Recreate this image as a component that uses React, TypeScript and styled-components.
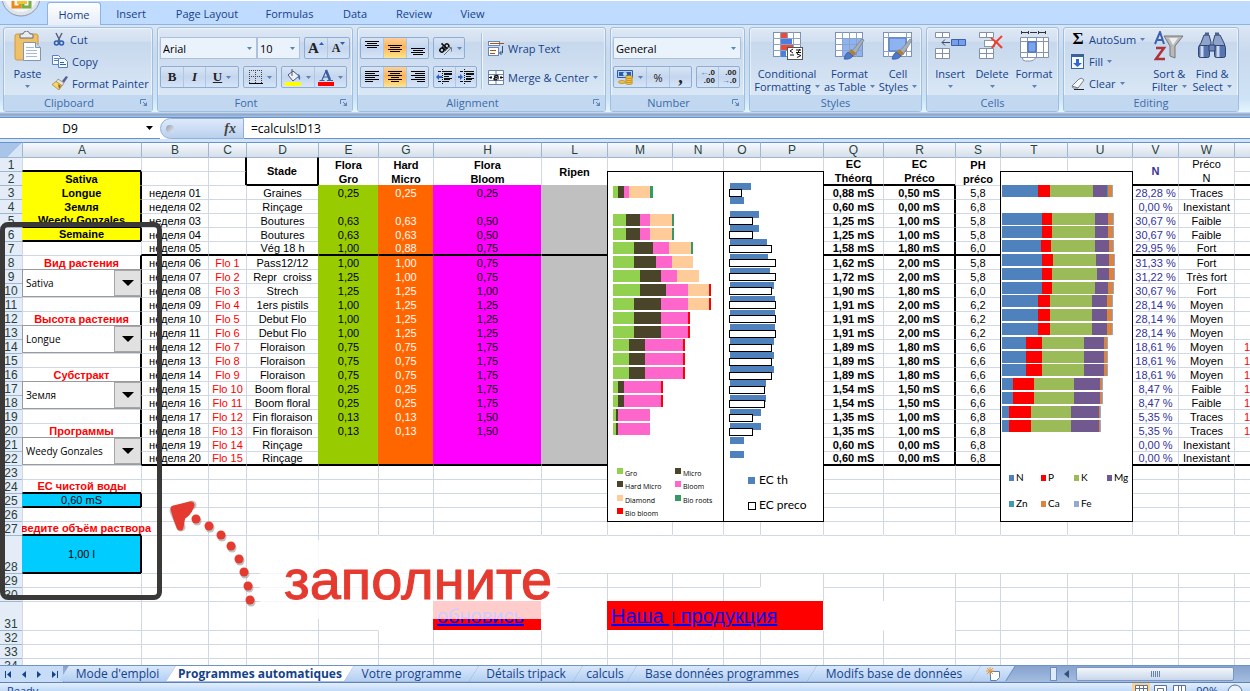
import React from 'react';
import styled, { createGlobalStyle, css } from 'styled-components';

const ui = '"Open Sans", "Noto Sans", sans-serif';
const sheetFont = '"Liberation Sans", Arial, sans-serif';

const Global = createGlobalStyle`
  *, *::before, *::after { box-sizing: border-box; }
  body { margin: 0; background: #fff; overflow: hidden; font-family: ${ui}; }
  button, select, input { font: inherit; color: inherit; margin: 0; padding: 0; border: 0; background: none; }
  button { cursor: pointer; }
  svg { display: block; flex: none; }
`;

const Page = styled.div`
  height: 100vh;
  display: flex;
  flex-direction: column;
  overflow: hidden;
  font-size: 11px;
  color: #15428b;
`;

/* ---------- ribbon ---------- */

const TabStrip = styled.nav`
  position: relative;
  flex: none;
  height: 25px;
  border-top: 1px solid #fff;
  border-bottom: 1px solid #8db2e3;
  background: #bfdbff;
  display: flex;
  align-items: flex-end;
  padding-left: 47px;
`;

const OfficeButton = styled.button`
  position: absolute;
  left: 0;
  top: 0;
  z-index: 2;
`;

const RibbonTab = styled.button<{ $w: number; $active?: boolean }>`
  width: ${p => p.$w}px;
  height: 23px;
  margin-bottom: -1px;
  color: #15428b;
  ${p => p.$active && css`
    background: linear-gradient(#fdfeff, #e6eef9);
    border: 1px solid #8db2e3;
    border-bottom: 0;
    border-radius: 3px 3px 0 0;
  `}
`;

const Ribbon = styled.div`
  flex: none;
  height: 92px;
  display: flex;
  gap: 4px;
  padding: 2px 3px 5px;
  background: linear-gradient(#dbe6f4, #c9d9ee 30%, #cfe3f6 80%, #e3f5fd 94%, #8ba5cc 97%, #a9bfdf);
`;

const GroupBox = styled.section<{ $w: number }>`
  width: ${p => p.$w}px;
  flex: none;
  display: flex;
  flex-direction: column;
  border: 1px solid #9fbfdf;
  border-radius: 3px;
  overflow: hidden;
  box-shadow: inset 0 0 0 1px rgba(255, 255, 255, 0.5);
  background: linear-gradient(#dee8f5, #d3e0f1 16%, #c7d8ed 17%, #d9e7f5 80%);
`;

const GroupBody = styled.div`
  flex: 1;
  display: flex;
  padding: 0 3px 0 2px;
`;

const GroupLabel = styled.div<{ $launcher?: boolean }>`
  position: relative;
  height: 16px;
  line-height: 16px;
  text-align: center;
  color: #3e6aaa;
  background: #c1d8f0;
  padding-right: ${p => (p.$launcher ? 18 : 0)}px;
  svg { position: absolute; right: 4px; top: 4px; }
`;

const Rows = styled.div`
  display: flex;
  flex-direction: column;
  gap: 7px;
  padding-top: 9px;
`;

const Row = styled.div<{ $gap?: number }>`
  display: flex;
  gap: ${p => p.$gap ?? 4}px;
`;

const Cluster = styled.div`
  display: flex;
  height: 22px;
  border: 1px solid #8eadd5;
  border-radius: 2px;
  background: linear-gradient(#d8e4f4, #c4d6ee 50%, #d6e4f6);
`;

const Tool = styled.button<{ $w?: number; $on?: boolean; $high?: boolean }>`
  width: ${p => p.$w ?? 22}px;
  display: flex;
  align-items: center;
  justify-content: center;
  gap: ${p => (p.$high ? 0 : 4)}px;
  color: #222;
  & + & { border-left: 1px solid #afc7e5; }
  ${p => p.$on && css`background: linear-gradient(#fbd09a, #fdb457 45%, #ffe58a);`}
  ${p => p.$high && css`svg { align-self: flex-start; margin-top: 4px; }`}
`;

const Glyph = styled.span<{ $size?: number; $italic?: boolean; $line?: boolean }>`
  font: bold ${p => p.$size ?? 13}px "Liberation Serif", serif;
  font-style: ${p => (p.$italic ? 'italic' : 'normal')};
  text-decoration: ${p => (p.$line ? 'underline' : 'none')};
`;

const Combo = styled.label<{ $w: number }>`
  position: relative;
  width: ${p => p.$w}px;
  height: 22px;
  display: flex;
  align-items: center;
  color: #000;
  background: #eaf2fb;
  border: 1px solid #abc1de;
  select { appearance: none; width: 100%; height: 20px; padding-left: 2px; outline: 0; }
  svg { position: absolute; right: 4px; }
`;

const Commands = styled.div<{ $pad?: number }>`
  display: flex;
  flex-direction: column;
  padding-left: ${p => p.$pad ?? 3}px;
`;

const Command = styled.button`
  height: 22px;
  display: flex;
  align-items: center;
  gap: 4px;
  text-align: left;
  white-space: nowrap;
`;

const IconSlot = styled.span`
  width: 14px;
  display: flex;
  justify-content: center;
  color: #000;
`;

const BigCommand = styled.button<{ $w: number }>`
  width: ${p => p.$w}px;
  flex: none;
  display: flex;
  flex-direction: column;
  align-items: center;
  padding-top: 3px;
  line-height: 13px;
  white-space: nowrap;
`;

const BigLine = styled.span`
  display: flex;
  align-items: center;
  justify-content: center;
  gap: 4px;
  min-height: 13px;
`;

const BigIcon = styled.span`
  height: 36px;
`;

const Divider = styled.span`
  width: 2px;
  height: 56px;
  margin: 5px 5px 0 4px;
  background: #a9c1de;
  border-right: 1px solid #f0f6fc;
`;

const Caret = ({ fill = '#5b83b5', up }: { fill?: string; up?: boolean }) => (
  <svg width="5" height="3" viewBox="0 0 5 3"><path d={up ? 'M0 3h5L2.500 0z' : 'M0 0h5L2.500 3z'} fill={fill} /></svg>
);

const Launcher = () => (
  <svg width="8" height="8" viewBox="0 0 8 8" fill="none" stroke="#5e86b8">
    <path d="M.5 5V.5H6" /><path d="M3 3l2 2" /><path d="M7 3v4H3z" fill="#5e86b8" stroke="none" />
  </svg>
);

const Group = ({ label, w, launcher, children }: { label: string; w: number; launcher?: boolean; children: React.ReactNode }) => (
  <GroupBox $w={w}>
    <GroupBody>{children}</GroupBody>
    <GroupLabel $launcher={launcher}>{label}{launcher && <Launcher />}</GroupLabel>
  </GroupBox>
);

const Lines = ({ y, ends }: { y: number; ends: [number, number][] }) => (
  <svg width="16" height="16" viewBox="0 0 16 16" stroke="#000" strokeWidth="1">
    {ends.map(([a, b], i) => <path key={i} d={`M${a} ${y + i * 2 + 0.5}H${b}`} />)}
  </svg>
);

const full: [number, number][] = [[1, 15], [3, 13], [1, 15], [3, 13]];
const leftLines: [number, number][] = [[1, 15], [1, 11], [1, 15], [1, 11], [1, 15], [1, 9]];
const midLines: [number, number][] = [[1, 15], [3, 13], [1, 15], [4, 12], [1, 15], [4, 12]];
const rightLines: [number, number][] = [[1, 15], [5, 15], [1, 15], [5, 15], [1, 15], [7, 15]];

const Indent = ({ flip }: { flip?: boolean }) => (
  <svg width="17" height="16" viewBox="0 0 17 16" stroke="#111">
    <path d="M2 2.500h3M7 2.500h9M8 5.500h8M8 7.500h5M8 9.500h8M2 12.500h3M7 12.500h6" />
    <path d="M8 5h8M8 10h6" strokeWidth="2" />
    <path d="M6.500 0v16" strokeDasharray="1 1" />
    <path d={flip ? 'M5 8L2 5v2H0v2h2v2z' : 'M0 8l3-3v2h3v2H3v2z'} fill="#2f63c4" stroke="none" />
  </svg>
);

const PasteIcon = () => (
  <svg width="28" height="31" viewBox="0 0 28 31">
    <rect x="1" y="3" width="23" height="26" rx="2" fill="#eec067" stroke="#c99a45" />
    <path d="M6 7V4q0-1 1-1h2q1-3 3.500-3T16 3h2q1 0 1 1v3z" fill="#e9edf2" stroke="#666d78" />
    <path d="M9.500 11.500h12l5 5v13h-17z" fill="#fbfdff" stroke="#8294b1" />
    <path d="M21.500 11.500v5h5" fill="#cbd8ea" stroke="#8294b1" />
    <path d="M12 16.500h8M12 19.500h11M12 22.500h11M12 25.500h11" stroke="#a9b9d2" />
  </svg>
);

const CutIcon = () => (
  <svg width="14" height="15" viewBox="0 0 14 15" fill="none">
    <path d="M4 1l4 8M10 1L6 9" stroke="#59647a" strokeWidth="1.500" />
    <circle cx="4.500" cy="11" r="2" stroke="#2f5fb5" strokeWidth="1.600" />
    <circle cx="9.500" cy="11" r="2" stroke="#2f5fb5" strokeWidth="1.600" />
  </svg>
);

const CopyIcon = () => (
  <svg width="16" height="14" viewBox="0 0 16 14" fill="#f4f9ff" stroke="#5a80bb">
    <path d="M.5 1.500h6l2 2v7h-8z" /><path d="M2 4.500h4M2 6.500h4" />
    <path d="M6.500 4.500h6l3 3v6h-9z" /><path d="M8 8.500h4M8 10.500h6" stroke="#2f62ae" />
  </svg>
);

const BrushIcon = () => (
  <svg width="16" height="14" viewBox="0 0 16 14">
    <path d="M10 5l4-5 2 1-4 6z" fill="#59618f" />
    <path d="M6 3l6 4-2 3-6-4z" fill="#e9e3dc" stroke="#8b7a6a" strokeWidth=".7" />
    <path d="M4 5.500l6 4L7 14 0 8.500z" fill="#f3d66d" stroke="#a57e25" strokeWidth=".7" />
    <path d="M6 8l3 2-2 3z" fill="#8e6428" />
  </svg>
);

const BorderIcon = () => (
  <svg width="14" height="14" viewBox="0 0 14 14" fill="none" stroke="#444">
    <path d="M.5 0v13M6.500 0v13M12.500 0v13M0 .5h13M0 6.500h13" strokeDasharray="1 1" /><path d="M0 13.500h14" stroke="#000" />
  </svg>
);

const FillIcon = () => (
  <svg width="17" height="17" viewBox="0 0 17 17">
    <path d="M3 6l5-4 6 5-6 5z" fill="#eef2f8" stroke="#4a5670" /><path d="M7 0v7" stroke="#4a5670" />
    <path d="M13 5q3 1 2 6-2-1-2-4z" fill="#3d6fb8" /><rect y="13" width="16" height="4" fill="#ff0" />
  </svg>
);

const FontColorIcon = () => (
  <svg width="16" height="17" viewBox="0 0 16 17">
    <path d="M4 11L8 2M7.500 1.500l4 9.500" fill="none" stroke="#3a5f9e" strokeWidth="1.200" /><path d="M8 1l4 10" stroke="#3a5f9e" strokeWidth="2.400" />
    <path d="M5 8h5M1.500 11.500h5M9 11.500h6" stroke="#3a5f9e" /><rect y="13" width="16" height="4" fill="#f00" />
  </svg>
);

const Orient = () => (
  <svg width="16" height="15" viewBox="0 0 16 15" fill="none" stroke="#111">
    <g transform="rotate(-45 7 7)" strokeWidth="1.600"><circle cx="4" cy="7" r="2" /><path d="M6.500 4.500V10M8.500 2v8" /><circle cx="10.500" cy="7.500" r="2" /></g>
    <path d="M7 14l7-7M10.500 6.500h4v4" stroke="#777" />
  </svg>
);

const WrapIcon = () => (
  <svg width="16" height="15" viewBox="0 0 16 15" fill="none">
    <rect x=".5" y=".5" width="11" height="4" fill="#fff" stroke="#6c87af" /><path d="M2 2.500h14" stroke="#a55318" />
    <rect x=".5" y="6.500" width="10" height="8" fill="#fff" stroke="#6c87af" /><path d="M2 9.500h6M2 12.500h5" stroke="#a55318" />
    <path d="M14.500 5v7H12M13.500 10l-2 2 2 2" stroke="#35507d" />
  </svg>
);

const MergeIcon = () => (
  <svg width="16" height="15" viewBox="0 0 16 15" fill="#fff" stroke="#6c87af">
    <path d="M.5.5h15v14H.5zM8 .5V4M8 11v3.500M.5 4.500h15M.5 10.500h15" />
    <path d="M1 7.500h3M12 7.500h3M3 6v3M13 6v3" stroke="#111" /><path d="M6 6.500q4-2 4 0v3M9 7.500q-3 0-3 1.500t3 .500" fill="none" stroke="#111" strokeWidth="1.400" />
  </svg>
);

const MoneyIcon = () => (
  <svg width="17" height="16" viewBox="0 0 17 16">
    <rect width="16" height="8" y="1" rx="1" fill="#2d5ca8" /><rect x="1.500" y="2.500" width="13" height="5" fill="none" stroke="#b9d1f1" /><circle cx="8" cy="5" r="2" fill="#c8dcf6" />
    <g fill="#f3c440" stroke="#a5781b" strokeWidth=".6"><ellipse cx="12" cy="14" rx="3.500" ry="1.500" /><ellipse cx="12" cy="12" rx="3.500" ry="1.500" /><ellipse cx="12" cy="10" rx="3.500" ry="1.500" /><ellipse cx="12" cy="8" rx="3.500" ry="1.500" /><ellipse cx="5" cy="13" rx="3.500" ry="1.500" /></g>
  </svg>
);

const DecimalBox = styled.span`
  font: bold 8px/8px ${sheetFont};
  display: flex;
  flex-direction: column;
  align-items: flex-end;
  i { font-style: normal; color: #2f63c4; }
`;

const Paintbrush = () => (
  <g>
    <path d="M28 8l2 1-9 15-4-3z" fill="#a8afb8" stroke="#747c87" strokeWidth=".7" />
    <path d="M17 18l5 4-3 4-5-4z" fill="#a98042" />
    <path d="M14 21l5 4q-3 4-9 3 1-5 4-7z" fill="#4b79ce" stroke="#3059a3" strokeWidth=".7" />
  </g>
);

const CondIcon = () => (
  <svg width="32" height="30" viewBox="0 0 32 30">
    <rect x="2.500" y="1.500" width="27" height="24" fill="#fff" stroke="#7b91b5" />
    <path d="M9.500 1v25M16.500 1v25M22.500 1v25M2 7.500h28M2 13.500h28M2 19.500h28" stroke="#8da3c6" />
    <path d="M10 2h6v5h-6zM10 14h12v5H10z" fill="#ee4a35" /><path d="M10 8h11v5H10zM10 20h5v6h-5z" fill="#4b7fe0" />
    <rect x="16.500" y="16.500" width="15" height="12" fill="#fff" stroke="#555" /><path d="M22 18l-3 2 3 2M19 24h4M25 19h5M25 21.500h5M29 18l-3 5M26 23l4 1.500-4 2" fill="none" stroke="#111" />
  </svg>
);

const TableIcon = () => (
  <svg width="32" height="30" viewBox="0 0 32 30">
    <rect x="1.500" y="1.500" width="27" height="24" fill="#fff" stroke="#7b91b5" /><path d="M8 8h20v17H8z" fill="#8db3f0" />
    <path d="M8.500 1v25M15.500 1v25M22.500 1v25M1 7.500h28M1 13.500h28M1 19.500h28" stroke="#8da3c6" /><Paintbrush />
  </svg>
);

const StylesIcon = () => (
  <svg width="32" height="30" viewBox="0 0 32 30">
    <rect x="1.500" y="1.500" width="28" height="24" fill="#fff" stroke="#7b91b5" /><path d="M6.500 1v25M24.500 1v25M1 6.500h28M1 20.500h28" stroke="#8da3c6" />
    <path d="M7 7h17v13H7z" fill="#8db3f0" stroke="#4874bd" /><Paintbrush />
  </svg>
);

const InsertIcon = () => (
  <svg width="32" height="30" viewBox="0 0 32 30" fill="#fff" stroke="#8290a8">
    <path d="M1.500 1.500h14v5h-14zM8.500 1.500v5M1.500 17.500h14v10h-14zM8.500 17.500v10M1.500 22.500h14" />
    <path d="M17.500 8.500h14v6h-14zM24.500 8.500v6" fill="#77a0ea" stroke="#3a62ad" /><path d="M8 11.500h8M11 8.500l-3 3 3 3" fill="none" stroke="#3d4a63" />
  </svg>
);

const DeleteIcon = () => (
  <svg width="28" height="30" viewBox="0 0 28 30" fill="#fff" stroke="#8290a8">
    <path d="M1.500 1.500h14v5h-14zM8.500 1.500v5M1.500 17.500h14v10h-14zM8.500 17.500v10M1.500 22.500h14" />
    <path d="M6.500 9.500h10v6h-10z" strokeDasharray="1 1" stroke="#344" /><path d="M13 7q6 4 11 10M24 5q-6 5-10 12" fill="none" stroke="#ee3f2c" strokeWidth="2" />
  </svg>
);

const FormatIcon = () => (
  <svg width="32" height="31" viewBox="0 0 32 31" fill="#fff" stroke="#8494ae">
    <path d="M2.500 6.500h28v20h-28z" /><path d="M9.500 6v21M18.500 6v21M25.500 6v21M2 10.500h29M2 21.500h29" />
    <path d="M10 11h8v10h-8z" fill="#7ba4ec" stroke="#3e68b5" /><path d="M4.500 27q0 3 3 3h5q3 0 5-3" />
    <path d="M4 1.500h6M12 1.500h7M21 1.500h6M3.500 0v3M10.500 0v3M20.500 0v3M27.500 0v3" stroke="#333" />
  </svg>
);

const SortIcon = () => (
  <svg width="30" height="30" viewBox="0 0 30 30" fill="none">
    <path d="M1 13l5-12 4 12M3 9h6" stroke="#3a62ad" strokeWidth="2" /><path d="M2 17h8L2 28h9" stroke="#ad3339" strokeWidth="2.500" />
    <path d="M10 5h19l-8 10v12l-5-2V15z" fill="#b9b9b9" stroke="#777" /><path d="M15 7h9l-5 7z" fill="#ededed" />
  </svg>
);

const FindIcon = () => (
  <svg width="30" height="30" viewBox="0 0 30 30" stroke="#31456f">
    <path d="M4 12l3-8h5l2 7v4H2zM16 11l2-7h5l4 8 1 3H16z" fill="#8ea4cc" /><path d="M8 3h4M18 3h4" stroke="#4b628f" strokeWidth="3" />
    <rect x="1.500" y="14.500" width="11" height="12" rx="2" fill="#5674ae" /><rect x="17.500" y="14.500" width="11" height="12" rx="2" fill="#5674ae" />
    <path d="M12 14h6v6h-6z" fill="#6f88ba" /><path d="M5 15v11M21 15v11" stroke="#cbd8f0" strokeWidth="3" />
  </svg>
);

const FillDown = () => (
  <svg width="14" height="15" viewBox="0 0 14 15"><rect x=".5" y=".5" width="12" height="14" fill="#f3f8ff" stroke="#3d6098" /><path d="M1 2h11" stroke="#3d6098" strokeWidth="2" /><path d="M5 5h3v4h3l-4.500 4L2 9h3z" fill="#2e68d2" /></svg>
);

const Eraser = () => (
  <svg width="14" height="13" viewBox="0 0 14 13"><path d="M1 9l7-7q3-2 5 1L7 11H2z" fill="#f8f9fb" stroke="#767f90" /><path d="M1 9l6 2" stroke="#767f90" /><path d="M3 12.500h10" stroke="#222" /></svg>
);

/* ---------- formula bar ---------- */

const FormulaBar = styled.div`
  flex: none;
  height: 25px;
  display: flex;
  font-size: 12px;
  color: #000;
  border-top: 1px solid #6593cf;
  border-bottom: 3px solid #d5e4f5;
`;

const NameBox = styled.label`
  width: 160px;
  display: flex;
  align-items: center;
  border-bottom: 1px solid #6593cf;
  input { width: 140px; text-align: center; outline: 0; }
  svg { margin-left: 6px; }
`;

const FxArea = styled.div`
  width: 84px;
  height: 21px;
  display: flex;
  align-items: center;
  justify-content: space-between;
  padding: 0 7px 0 5px;
  border: 1px solid #8fb0da;
  border-radius: 11px 0 0 11px;
  background: linear-gradient(#dfeafa, #b9d0ee);
  font: italic bold 14px "Liberation Serif", serif;
  color: #444;
`;

const Knob = styled.span`
  width: 8px;
  height: 8px;
  border-radius: 50%;
  background: linear-gradient(135deg, #8f9db3, #e9edf3);
`;

const FormulaInput = styled.input`
  flex: 1;
  padding-left: 7px !important;
  border-bottom: 1px solid #6593cf !important;
  outline: 0;
`;

/* ---------- sheet ---------- */

const Sheet = styled.main`
  position: relative;
  flex: 1;
  min-height: 0;
  overflow: hidden;
  font-family: ${sheetFont};
  color: #000;
`;

const Table = styled.table`
  table-layout: fixed;
  width: 100%;
  border-spacing: 0;
  font-size: 11px;
  line-height: 12px;
`;

const ColHead = styled.th`
  height: 15px;
  padding: 0;
  font-weight: normal;
  font-size: 12px;
  color: #27413e;
  border-left: 1px solid #9eb6ce;
  border-top: 1px solid #6593cf;
  background: linear-gradient(#f7fafd, #d5deea);
`;

const Corner = styled(ColHead)`
  border-left: 0;
  background: linear-gradient(135deg, #a9c4e9 60%, #d7e5f7 60%);
`;

const RowHead = styled.th<{ $h: number }>`
  position: relative;
  z-index: 1;
  height: ${p => p.$h}px;
  padding: 0;
  vertical-align: bottom;
  font-weight: normal;
  font-size: 12px;
  color: #27413e;
  background: #e4ecf7;
  border-top: 1px solid #9eb6ce;
`;

interface CellProps {
  $fill?: string; $color?: string; $bold?: boolean; $t?: boolean; $r?: boolean; $b?: boolean; $l?: boolean;
  $noTop?: boolean; $noLeft?: boolean; $mid?: boolean; $end?: boolean; $head?: boolean;
}

const Cell = styled.td<CellProps>`
  padding: 0;
  text-align: ${p => (p.$end ? 'right' : 'center')};
  vertical-align: ${p => (p.$mid ? 'middle' : 'bottom')};
  white-space: nowrap;
  color: ${p => p.$color ?? '#000'};
  font-weight: ${p => (p.$bold ? 'bold' : 'normal')};
  background: ${p => p.$fill ?? 'transparent'};
  border-style: solid;
  border-color: ${p => (p.$head ? '#9eb6ce' : p.$t ? '#000' : p.$noTop ? 'transparent' : p.$fill ?? '#d0d7e5')} #000 #000
    ${p => (p.$l ? '#000' : p.$noLeft ? 'transparent' : p.$fill ?? '#d0d7e5')};
  border-width: 1px ${p => (p.$r ? 1 : 0)}px ${p => (p.$b ? 1 : 0)}px 1px;
`;

const TwoLine = styled.div`
  line-height: 14px;
  margin: -1px 0;
`;

const Spill = styled.div`
  display: flex;
  justify-content: center;
`;

const PickerCell = styled(Cell)`
  position: relative;
  border: 0;
`;

const Picker = styled.label`
  display: flex;
  height: 28px;
  border: 1px solid #9a9a9a;
  border-width: 1px 0 1px 1px;
  background: #fff;
  font: 10px ${ui};
  select { flex: 1; min-width: 0; appearance: none; padding-left: 3px; outline: 0; }
`;

const PickerArrow = styled.span`
  width: 27px;
  display: flex;
  align-items: center;
  justify-content: center;
  background: #e1e1e1;
  border: 1px solid #a6a6a6;
`;

const ChartCell = styled.td`
  position: relative;
  padding: 0;
  svg { position: absolute; left: 0; top: 0; z-index: 1; }
`;

const LinkCell = styled(Cell)`
  font-size: 20px;
  line-height: 26px;
  text-align: left;
  vertical-align: middle;
  overflow: hidden;
  a { color: #00f; padding-left: 3px; }
`;

const ClippedLink = styled.div`
  overflow: hidden;
  text-indent: -12px;
`;

const cols: [string, number][] = [
  ['A', 119], ['B', 67], ['C', 38], ['D', 72], ['E', 60], ['G', 55], ['H', 108], ['L', 66], ['M', 65], ['N', 51],
  ['O', 37], ['P', 63], ['Q', 60], ['R', 72], ['S', 45], ['T', 67], ['U', 65], ['V', 46], ['W', 56],
];
const letters = 'ABCDEGHLMNOPQRSTUVWX';

const data = [
  ['01', 'Graines', '0,25', '0,25', '0,25', '0,88', '0,50', '5,8', '28,28', 'Traces'],
  ['02', 'Rinçage', '', '', '', '0,60', '0,00', '6,8', '0,00', 'Inexistant'],
  ['03', 'Boutures', '0,63', '0,63', '0,50', '1,25', '1,00', '5,8', '30,67', 'Faible'],
  ['04', 'Boutures', '0,63', '0,63', '0,50', '1,25', '1,00', '5,8', '30,67', 'Faible'],
  ['05', 'Vég 18 h', '1,00', '0,88', '0,75', '1,58', '1,80', '6,0', '29,95', 'Fort'],
  ['06', 'Pass12/12', '1,00', '1,00', '0,75', '1,62', '2,00', '5,8', '31,33', 'Fort'],
  ['07', 'Repr\u00a0 croiss', '1,25', '1,00', '0,75', '1,72', '2,00', '5,8', '31,22', 'Très fort'],
  ['08', 'Strech', '1,25', '1,25', '1,00', '1,90', '1,80', '6,0', '30,67', 'Fort'],
  ['09', '1ers pistils', '1,00', '1,25', '1,25', '1,91', '2,00', '6,2', '28,14', 'Moyen'],
  ['10', 'Debut Flo', '1,00', '1,25', '1,25', '1,91', '2,00', '6,2', '28,14', 'Moyen'],
  ['11', 'Debut Flo', '1,00', '1,25', '1,25', '1,91', '2,00', '6,2', '28,14', 'Moyen'],
  ['12', 'Floraison', '0,75', '0,75', '1,75', '1,89', '1,80', '6,6', '18,61', 'Moyen'],
  ['13', 'Floraison', '0,75', '0,75', '1,75', '1,89', '1,80', '6,6', '18,61', 'Moyen'],
  ['14', 'Floraison', '0,75', '0,75', '1,75', '1,89', '1,80', '6,6', '18,61', 'Moyen'],
  ['15', 'Boom floral', '0,25', '0,25', '1,75', '1,54', '1,50', '6,6', '8,47', 'Faible'],
  ['16', 'Boom floral', '0,25', '0,25', '1,75', '1,54', '1,50', '6,6', '8,47', 'Faible'],
  ['17', 'Fin floraison', '0,13', '0,13', '1,50', '1,35', '1,00', '6,8', '5,35', 'Traces'],
  ['18', 'Fin floraison', '0,13', '0,13', '1,50', '1,35', '1,00', '6,8', '5,35', 'Traces'],
  ['19', 'Rinçage', '', '', '', '0,60', '0,00', '6,8', '0,00', 'Inexistant'],
  ['20', 'Rinçage', '', '', '', '0,60', '0,00', '6,8', '0,00', 'Inexistant'],
];

const labels: Record<number, string> = {
  2: 'Sativa', 3: 'Longue', 4: 'Земля', 5: 'Weedy Gonzales', 6: 'Semaine', 8: 'Вид растения', 12: 'Высота растения',
  16: 'Субстракт', 20: 'Программы', 24: 'ЕС чистой воды', 25: '0,60 mS', 27: 'Введите объём раствора', 28: '1,00 l',
};
const pickers: Record<number, string> = { 9: 'Sativa', 13: 'Longue', 17: 'Земля', 21: 'Weedy Gonzales' };
const heads: Record<string, string[]> = {
  D: ['Stade'], E: ['Flora', 'Gro'], G: ['Hard', 'Micro'], H: ['Flora', 'Bloom'], L: ['Ripen'],
  Q: ['EC', 'Théorq'], R: ['EC', 'Préco'], S: ['PH', 'préco'], V: ['N'], W: ['Préco', 'N'],
};

/* heavy rules: the row (or column) whose leading edge carries the line */
const hRules: [number, string][] = [
  [2, 'A'], [6, 'A'], [7, 'A'], [25, 'A'], [26, 'A'], [28, 'A'], [29, 'A'],
  [3, 'DQRVWX'], [8, 'BCDEGHLQRSVWX'], [23, 'BCDEGHLQRSVWX'],
];
const vRules: [string, number, number][] = [
  ['B', 2, 6], ['B', 8, 22], ['B', 25, 25], ['B', 28, 28], ['D', 1, 2], ['E', 1, 2], ['S', 3, 22],
];
const ruleAbove = (row: number, c: string) => hRules.some(([r, s]) => r === row && s.includes(c));
const ruleBefore = (row: number, c: string) => !!c && vRules.some(([v, a, b]) => v === c && row >= a && row <= b);
const edges = (row: number, c: string, span = 1) => {
  const next = letters[letters.indexOf(c) + 1] ?? '';
  return { $t: ruleAbove(row, c), $b: ruleAbove(row + span, c), $l: ruleBefore(row, c), $r: ruleBefore(row, next) };
};

const fills: Record<string, string> = { E: '#99cc00', G: '#ff6600', H: '#ff00ff', L: '#c0c0c0' };

const content = (row: number, c: string): { text: string; props?: CellProps } => {
  if (c === 'A') {
    const text = labels[row] ?? '';
    if (row >= 2 && row <= 6) return { text, props: { $fill: '#ffff00', $bold: true } };
    if (row === 25 || row === 28) return { text, props: { $fill: '#00ccff', $mid: true } };
    return { text, props: { $color: '#ff0000', $bold: true } };
  }
  const d = row >= 3 && row <= 22 ? data[row - 3] : null;
  if (!d) return { text: '' };
  switch (c) {
    case 'B': return { text: `неделя ${d[0]}` };
    case 'C': return { text: row >= 8 ? `Flo ${row - 7}` : '', props: { $color: '#ff0000' } };
    case 'D': return { text: d[1] };
    case 'E': return { text: d[2], props: { $fill: fills.E } };
    case 'G': return { text: d[3], props: { $fill: fills.G, $color: '#fff' } };
    case 'H': return { text: d[4], props: { $fill: fills.H } };
    case 'L': return { text: '', props: { $fill: fills.L } };
    case 'Q': return { text: `${d[5]} mS`, props: { $bold: true } };
    case 'R': return { text: `${d[6]} mS`, props: { $bold: true } };
    case 'S': return { text: d[7] };
    case 'V': return { text: `${d[8]} %`, props: { $color: '#333399' } };
    case 'W': return { text: d[9] };
    case 'X': return { text: row >= 14 && row <= 20 ? '1' : '', props: { $color: '#ff0000', $end: true } };
    default: return { text: '' };
  }
};

/* ---------- charts ---------- */

const Chart = styled.svg`
  font-family: Lato, ${ui};
`;

const mixColors = ['#92d050', '#4a452a', '#ff66cc', '#ffcc99', '#339966', '#ff0000'];
/* sheet row, then the right edge of each series in order, from the plot's left edge */
const mix: [number, number[]][] = [
  [3, [5, 11, 16, 37, 40, 40]], [5, [13, 27, 37, 59, 61, 61]], [6, [13, 27, 37, 59, 61, 61]], [7, [21, 40, 56, 78, 80, 80]],
  [8, [21, 43, 59, 80]], [9, [27, 48, 64, 86]], [10, [27, 53, 75, 96, 96, 98]], [11, [21, 48, 75, 96, 96, 98]],
  [12, [21, 48, 75, 75, 75, 77]], [13, [21, 48, 75, 75, 75, 77]], [14, [16, 32, 70, 70, 70, 72]], [15, [16, 32, 70, 70, 70, 72]],
  [16, [16, 32, 70, 70, 70, 72]], [17, [5, 11, 48, 48, 48, 50]], [18, [5, 11, 48, 48, 48, 50]], [19, [3, 5, 37]], [20, [3, 5, 37]],
];
const ecTh = [21, 14, 29, 29, 37, 38, 40, 44, 45, 45, 45, 44, 44, 44, 36, 36, 31, 31, 14, 14];
const ecPreco = [13, 0, 24, 24, 43, 47, 47, 43, 47, 47, 47, 43, 43, 43, 36, 36, 24, 24, 0, 0];

const npkColors = ['#4f81bd', '#ff0000', '#9bbb59', '#71588f', '#4198af', '#db843d', '#93a9cf'];
const early = [40, 50, 93, 106, 106, 111, 112];
const middle = [36, 48, 90, 105, 105, 110, 111];
const flower = [24, 40, 82, 102, 102, 105, 106];
const boom = [11, 32, 72, 98, 98, 100, 101];
const finish = [7, 29, 69, 97, 97, 98, 99];
const npk: [number, number[]][] = [
  [3, [36, 48, 91, 105, 106, 110, 111]], [5, early], [6, early], [7, [39, 49, 93, 107, 107, 111, 112]], [8, [40, 51, 94, 107, 107, 112, 113]],
  [9, [40, 50, 95, 107, 107, 112, 113]], [10, early], [11, middle], [12, middle], [13, middle], [14, flower], [15, flower], [16, flower],
  [17, boom], [18, boom], [19, finish], [20, finish],
];

const Stacked = ({ rows, colors, x, y, pitch }: { rows: [number, number[]][]; colors: string[]; x: number; y: number; pitch: number }) => (
  <g shapeRendering="crispEdges">
    {rows.map(([row, ends]) => ends.map((end, i) => {
      const start = i ? ends[i - 1] : 0;
      return end > start
        ? <rect key={`${row}-${i}`} x={x + start} y={Math.round(y + (row - 3) * pitch)} width={end - start} height="12" fill={colors[i]} />
        : null;
    }))}
  </g>
);

const mixLegend: [string, number, number, number][] = [
  ['Gro', 10, 297, 0], ['Micro', 68, 297, 1], ['Hard Micro', 10, 310, 1], ['Bloom', 68, 310, 2],
  ['Diamond', 10, 324, 3], ['Bio roots', 68, 324, 4], ['Bio bloom', 10, 337, 5],
];

const DoseCharts = () => (
  <Chart width="217" height="351" viewBox="0 0 217 351">
    <rect x=".5" y=".5" width="216" height="350" fill="#fff" stroke="#000" />
    <path d="M116.500 0v351" stroke="#000" />
    <Stacked rows={mix} colors={mixColors} x={6} y={15} pitch={13.95} />
    <g shapeRendering="crispEdges">
      {ecTh.map((w, i) => <rect key={i} x="123" y={12 + Math.round(i * 14.1)} width={w} height="7" fill="#4f81bd" />)}
      {ecPreco.map((w, i) => w > 0 && <rect key={i} x="122.500" y={18.5 + Math.round(i * 14.05)} width={w - 1} height="7" fill="#fff" stroke="#000" />)}
      <rect x="141" y="306" width="7" height="7" fill="#4f81bd" />
      <rect x="141.500" y="331.500" width="7" height="7" fill="#fff" stroke="#000" />
    </g>
    {mixLegend.map(([t, x, y, k]) => (
      <g key={t} fontSize="7" fontFamily="Open Sans">
        <rect x={x} y={y} width="6" height="6" fill={mixColors[k]} />
        <text x={x + 8} y={y + 8}>{t}</text>
      </g>
    ))}
    <g fontSize="12"><text x="152" y="313">EC th</text><text x="152" y="338">EC preco</text></g>
  </Chart>
);

const npkLegend: [string, number, number][] = [['N', 9, 304], ['P', 41, 304], ['K', 74, 304], ['Mg', 107, 304], ['Zn', 9, 330], ['Ca', 41, 330], ['Fe', 74, 330]];

const NutrientChart = () => (
  <Chart width="133" height="351" viewBox="0 0 133 351">
    <rect x=".5" y=".5" width="132" height="350" fill="#fff" stroke="#000" />
    <Stacked rows={npk} colors={npkColors} x={2} y={14} pitch={13.8} />
    {npkLegend.map(([t, x, y], i) => (
      <g key={t} fontSize="10">
        <rect x={x} y={y} width="5" height="6" fill={npkColors[i]} /><text x={x + 7} y={y + 6}>{t}</text>
      </g>
    ))}
  </Chart>
);

/* ---------- annotations drawn over the sheet ---------- */

const Haze = styled.div`
  position: absolute;
  left: 260px;
  top: 398px;
  width: 297px;
  height: 79px;
  background: rgba(255, 255, 255, 0.8);
`;

const Callout = styled.div`
  position: absolute;
  z-index: 2;
  left: 284px;
  top: 406px;
  font-size: 56px;
  line-height: 64px;
  color: #e53a2f;
  -webkit-text-stroke: 1px #e53a2f;
`;

const Frame = styled.div`
  position: absolute;
  z-index: 3;
  left: 0;
  top: 80px;
  width: 162px;
  height: 378px;
  border: 5px solid #3b3838;
  border-radius: 8px;
  pointer-events: none;
`;

const DottedArrow = styled.svg`
  position: absolute;
  z-index: 2;
  left: 165px;
  top: 355px;
`;

const dots = [[31, 22], [44, 29], [56, 38], [66, 49], [74, 62], [79, 75], [83, 89], [85, 103]];

/* ---------- bottom bars ---------- */

const BottomBar = styled.footer`
  flex: none;
  height: 17px;
  display: flex;
  color: #15428b;
  font-size: 12px;
  line-height: 15px;
  background: linear-gradient(#86a3ce, #a4bde0);
  border-top: 1px solid #6f93c5;
`;

const NavButtons = styled.div`
  width: 64px;
  display: flex;
  align-items: center;
  justify-content: space-around;
  background: #c7dcf6;
  padding: 0 2px;
  border-right: 1px solid #8baad3;
`;

const SheetTab = styled.button<{ $w: number; $active?: boolean }>`
  position: relative;
  width: ${p => p.$w}px;
  height: 15px;
  line-height: 15px;
  z-index: 0;
  white-space: nowrap;
  font-weight: ${p => (p.$active ? 'bold' : 'normal')};
  svg { margin: 0 auto; }
  &::before {
    content: '';
    position: absolute;
    z-index: -1;
    inset: 0 -1px 0 0;
    transform: skewX(-32deg);
    border-right: 1px solid #6b8fc4;
    background: ${p => (p.$active ? '#fff' : 'linear-gradient(#d9e8fb, #b5d0f2)')};
  }
`;

const ScrollArea = styled.div`
  flex: 1;
  display: flex;
  align-items: center;
  justify-content: flex-end;
  padding-right: 16px;
  gap: 7px;
`;

const Splitter = styled.span`
  width: 7px;
  height: 14px;
  background: #dfeafa;
  border: 1px solid #6b8fc4;
`;

const Thumb = styled.span`
  width: 158px;
  height: 14px;
  border: 1px solid #7b98c4;
  border-radius: 2px;
  background: linear-gradient(#f2f6fb, #c8d6ea);
  display: flex;
  align-items: center;
  justify-content: center;
`;

const StatusBar = styled.div`
  flex: none;
  height: 9px;
  display: flex;
  justify-content: space-between;
  padding: 0 6px 0 7px;
  overflow: hidden;
  border-top: 1px solid #5f83b8;
  background: linear-gradient(#e2eefd, #c2daf8);
  line-height: 16px;
`;

const ViewTools = styled.div`
  display: flex;
  gap: 8px;
`;

const NavGlyph = ({ d, label }: { d: string; label: string }) => (
  <button aria-label={label}><svg width="8" height="7" viewBox="0 0 8 7" fill="#15428b"><path d={d} /></svg></button>
);

const sheetTabs: [string, number][] = [
  ["Mode d'emploi", 107], ['Programmes automatiques', 178], ['Votre programme', 125], ['Détails tripack', 104],
  ['calculs', 54], ['Base données programmes', 180], ['Modifs base de données', 164],
];

const rowHeight = (r: number) => (r === 28 ? 38 : r === 31 ? 29 : 14);

const SheetRow = ({ row }: { row: number }) => {
  const cells: React.ReactNode[] = [];
  for (const c of letters) {
    if (row <= 2 && heads[c]) {
      if (row === 1) {
        cells.push(
          <Cell key={c} rowSpan={2} $head $mid $bold={c !== 'W'} $color={c === 'V' ? '#333399' : undefined} {...edges(1, c, 2)}>
            <TwoLine>{heads[c].map((t, i) => <React.Fragment key={i}>{i > 0 && <br />}{t}</React.Fragment>)}</TwoLine>
          </Cell>,
        );
      }
      continue;
    }
    if (row >= 2 && row <= 26 && 'MNOPTU'.includes(c)) {
      if (row === 2 && c === 'M') cells.push(<ChartCell key={c} rowSpan={25} colSpan={4}><DoseCharts /></ChartCell>);
      if (row === 2 && c === 'T') cells.push(<ChartCell key={c} rowSpan={25} colSpan={2}><NutrientChart /></ChartCell>);
      continue;
    }
    if (c === 'A' && pickers[row]) {
      cells.push(
        <PickerCell key={c} rowSpan={2}>
          <Picker>
            <select aria-label={labels[row - 1]}><option>{pickers[row]}</option></select>
            <PickerArrow><svg width="12" height="6" viewBox="0 0 12 6"><path d="M0 0h12L6 6z" /></svg></PickerArrow>
          </Picker>
        </PickerCell>,
      );
      continue;
    }
    if (c === 'A' && pickers[row - 1]) continue;
    if (row === 31 && 'GHLMNOPQR'.includes(c)) {
      if (c === 'H') cells.push(<LinkCell key={c} $fill="#ff0000"><a href="#update">обновись</a></LinkCell>);
      else if (c === 'M') cells.push(<LinkCell key={c} $fill="#ff0000"><a href="#products">Наша&nbsp;</a></LinkCell>);
      else if (c === 'N') cells.push(<LinkCell key={c} colSpan={3} $fill="#ff0000"><ClippedLink><a href="#products">и продукция</a></ClippedLink></LinkCell>);
      else if (c !== 'O' && c !== 'P') cells.push(<Cell key={c} $fill="#fff" />);
      continue;
    }
    const { text, props } = content(row, c);
    const blankTop = (row === 32 && 'GHLMNOPQR'.includes(c)) || (row === 30 && c === 'P');
    const blankLeft = (row === 28 && 'GHLMNOPQRSTUVWX'.includes(c)) || (row === 30 && c === 'P');
    cells.push(
      <Cell key={c} {...props} {...edges(row, c)} $head={row === 1} $noTop={blankTop} $noLeft={blankLeft}>
        {row === 27 && c === 'A' ? <Spill>{text}</Spill> : text}
      </Cell>,
    );
  }
  return <tr><RowHead $h={rowHeight(row)} scope="row">{row}</RowHead>{cells}</tr>;
};

export default function App() {
  return (
    <Page>
      <Global />
      <TabStrip>
        <OfficeButton aria-label="Office">
          <svg width="42" height="16" viewBox="0 0 42 16">
            <circle cx="21" cy="-4" r="19" fill="#dfe3ea" stroke="#8c97aa" /><circle cx="21" cy="-5" r="16" fill="#f4f5f7" />
            <g fill="none" strokeWidth="3"><path d="M13-1v7h7V-1" stroke="#e8891c" /><path d="M23-1v7h7V-1" stroke="#76b043" /><path d="M17 1.500h10" stroke="#f3c22e" /></g>
          </svg>
        </OfficeButton>
        <RibbonTab $w={54} $active>Home</RibbonTab>
        <RibbonTab $w={60}>Insert</RibbonTab>
        <RibbonTab $w={92}>Page Layout</RibbonTab>
        <RibbonTab $w={73}>Formulas</RibbonTab>
        <RibbonTab $w={58}>Data</RibbonTab>
        <RibbonTab $w={60}>Review</RibbonTab>
        <RibbonTab $w={57}>View</RibbonTab>
      </TabStrip>

      <Ribbon>
        <Group label="Clipboard" w={150} launcher>
          <BigCommand $w={43}><BigIcon><PasteIcon /></BigIcon>Paste<BigLine><Caret /></BigLine></BigCommand>
          <Commands>
            <Command><CutIcon />Cut</Command>
            <Command><CopyIcon />Copy</Command>
            <Command><BrushIcon />Format Painter</Command>
          </Commands>
        </Group>
        <Group label="Font" w={196} launcher>
          <Rows>
            <Row>
              <Row $gap={0}>
                <Combo $w={97}><select aria-label="Font"><option>Arial</option></select><Caret /></Combo>
                <Combo $w={43}><select aria-label="Font size"><option>10</option></select><Caret /></Combo>
              </Row>
              <Cluster>
                <Tool $w={22} $high><Glyph $size={15}>A</Glyph><Caret fill="#2f5fb5" up /></Tool>
                <Tool $w={22} $high><Glyph $size={12}>A</Glyph><Caret fill="#2f5fb5" /></Tool>
              </Cluster>
            </Row>
            <Row>
              <Cluster>
                <Tool><Glyph>B</Glyph></Tool>
                <Tool><Glyph $italic>I</Glyph></Tool>
                <Tool $w={33}><Glyph $line>U</Glyph><Caret /></Tool>
              </Cluster>
              <Cluster><Tool $w={32}><BorderIcon /><Caret /></Tool></Cluster>
              <Cluster>
                <Tool $w={32}><FillIcon /><Caret /></Tool>
                <Tool $w={32}><FontColorIcon /><Caret /></Tool>
              </Cluster>
            </Row>
          </Rows>
        </Group>
        <Group label="Alignment" w={249} launcher>
          <Rows>
            <Row>
              <Cluster>
                <Tool $w={22} aria-label="Top"><Lines y={1} ends={full} /></Tool>
                <Tool $w={23} $on aria-label="Middle"><Lines y={5} ends={full} /></Tool>
                <Tool $w={22} aria-label="Bottom"><Lines y={8} ends={full} /></Tool>
              </Cluster>
              <Cluster><Tool $w={30} aria-label="Orientation"><Orient /><Caret /></Tool></Cluster>
            </Row>
            <Row>
              <Cluster>
                <Tool $w={22} aria-label="Left"><Lines y={2} ends={leftLines} /></Tool>
                <Tool $w={23} $on aria-label="Centre"><Lines y={2} ends={midLines} /></Tool>
                <Tool $w={22} aria-label="Right"><Lines y={2} ends={rightLines} /></Tool>
              </Cluster>
              <Cluster>
                <Tool $w={21} aria-label="Decrease indent"><Indent /></Tool>
                <Tool $w={21} aria-label="Increase indent"><Indent flip /></Tool>
              </Cluster>
            </Row>
          </Rows>
          <Divider />
          <Rows>
            <Command><WrapIcon />Wrap Text</Command>
            <Command><MergeIcon />Merge &amp; Center <Caret /></Command>
          </Rows>
        </Group>
        <Group label="Number" w={135} launcher>
          <Rows>
            <Combo $w={128}><select aria-label="Number format"><option>General</option></select><Caret /></Combo>
            <Row>
              <Cluster>
                <Tool $w={32} aria-label="Accounting"><MoneyIcon /><Caret /></Tool>
                <Tool $w={23}>%</Tool>
                <Tool $w={22}><Glyph $size={18}>,</Glyph></Tool>
              </Cluster>
              <Cluster>
                <Tool $w={21}><DecimalBox><span><i>←</i>.0</span><span>.00</span></DecimalBox></Tool>
                <Tool $w={21}><DecimalBox><span>.00</span><span><i>→</i>.0</span></DecimalBox></Tool>
              </Cluster>
            </Row>
          </Rows>
        </Group>
        <Group label="Styles" w={173}>
          <BigCommand $w={70}><BigIcon><CondIcon /></BigIcon>Conditional<BigLine>Formatting <Caret /></BigLine></BigCommand>
          <BigCommand $w={55}><BigIcon><TableIcon /></BigIcon>Format<BigLine>as Table <Caret /></BigLine></BigCommand>
          <BigCommand $w={42}><BigIcon><StylesIcon /></BigIcon>Cell<BigLine>Styles <Caret /></BigLine></BigCommand>
        </Group>
        <Group label="Cells" w={133}>
          <BigCommand $w={42}><BigIcon><InsertIcon /></BigIcon>Insert<BigLine><Caret /></BigLine></BigCommand>
          <BigCommand $w={42}><BigIcon><DeleteIcon /></BigIcon>Delete<BigLine><Caret /></BigLine></BigCommand>
          <BigCommand $w={42}><BigIcon><FormatIcon /></BigIcon>Format<BigLine><Caret /></BigLine></BigCommand>
        </Group>
        <Group label="Editing" w={176}>
          <Commands $pad={5}>
            <Command><IconSlot><Glyph $size={17}>Σ</Glyph></IconSlot>AutoSum <Caret /></Command>
            <Command><FillDown />Fill <Caret /></Command>
            <Command><Eraser />Clear <Caret /></Command>
          </Commands>
          <BigCommand $w={48}><BigIcon><SortIcon /></BigIcon>Sort &amp;<BigLine>Filter <Caret /></BigLine></BigCommand>
          <BigCommand $w={38}><BigIcon><FindIcon /></BigIcon>Find &amp;<BigLine>Select <Caret /></BigLine></BigCommand>
        </Group>
      </Ribbon>

      <FormulaBar>
        <NameBox>
          <input aria-label="Name box" defaultValue="D9" />
          <svg width="7" height="4" viewBox="0 0 7 4"><path d="M0 0h7L3.500 4z" /></svg>
        </NameBox>
        <FxArea><Knob />fx</FxArea>
        <FormulaInput aria-label="Formula" defaultValue="=calculs!D13" />
      </FormulaBar>

      <Sheet>
        <Table>
          <colgroup>
            <col width={22} />
            {cols.map(([n, w]) => <col key={n} width={w} />)}
            <col />
          </colgroup>
          <thead>
            <tr><Corner aria-label="Select all" />{[...letters].map(l => <ColHead key={l} scope="col">{l === 'X' ? '' : l}</ColHead>)}</tr>
          </thead>
          <tbody>
            {Array.from({ length: 34 }, (_, i) => <SheetRow key={i} row={i + 1} />)}
          </tbody>
        </Table>
        <Haze />
        <Callout>заполните</Callout>
        <DottedArrow width="95" height="112" viewBox="0 0 95 112">
          <g fill="#999" opacity=".6" transform="translate(1 2)">{dots.map(([x, y], i) => <circle key={i} cx={x} cy={y} r="4.500" />)}</g>
          <path d="M8 15L26 9M8 15l7 16" stroke="#999" strokeWidth="9" strokeLinecap="round" opacity=".6" transform="translate(1 -1)" />
          <path d="M9 12L26 8q-3 9-9 11l-2 11q-4-10-6-18z" fill="#e53a2f" stroke="#e53a2f" strokeWidth="7" strokeLinejoin="round" />
          <g fill="#e53a2f">{dots.map(([x, y], i) => <circle key={i} cx={x} cy={y} r="4.500" />)}</g>
        </DottedArrow>
        <Frame />
      </Sheet>

      <BottomBar>
        <NavButtons>
          <NavGlyph label="First sheet" d="M0 0h1v7H0zM6 0v7L2 3.500z" />
          <NavGlyph label="Previous sheet" d="M6 0v7L2 3.500z" />
          <NavGlyph label="Next sheet" d="M2 0v7l4-3.500z" />
          <NavGlyph label="Last sheet" d="M2 0v7l4-3.500zM7 0h1v7H7z" />
        </NavButtons>
        {sheetTabs.map(([t, w]) => <SheetTab key={t} $w={w} $active={t.startsWith('Programmes')}>{t}</SheetTab>)}
        <SheetTab $w={34} aria-label="Insert sheet">
          <svg width="15" height="14" viewBox="0 0 15 14"><path d="M4.500 4.500h9v6l-3 3h-6z" fill="#fff" stroke="#5f7fae" /><path d="M4 0v8M0 4h8M1 1l6 6M7 1L1 7" stroke="#e79a2b" /></svg>
        </SheetTab>
        <ScrollArea>
          <Splitter />
          <svg width="5" height="8" viewBox="0 0 5 8"><path d="M5 0v8L0 4z" fill="#35507d" /></svg>
          <Thumb><svg width="9" height="6" viewBox="0 0 9 6" stroke="#6480ad"><path d="M.5 0v6M2.500 0v6M4.500 0v6M6.500 0v6M8.500 0v6" /></svg></Thumb>
        </ScrollArea>
      </BottomBar>
      <StatusBar>
        <span>Ready</span>
        <ViewTools>
          <svg width="56" height="9" viewBox="0 0 56 9" fill="#fff" stroke="#5c7099">
            <rect x="0" y="0" width="18" height="9" fill="#fcd08a" stroke="none" /><path d="M3.500 2.500h12v8h-12zM3 5.500h12M7.500 2v7M11.500 2v7" />
            <path d="M22.500 2.500h12v8h-12zM25.500 5.500h6v5h-6zM41.500 2.500h12v8h-12zM46.500 2v7M49.500 2v7" />
          </svg>
          <span>90%</span>
          <svg width="18" height="9" viewBox="0 0 18 9"><circle cx="9" cy="9" r="7" fill="#eaf2fc" stroke="#5c7099" /></svg>
        </ViewTools>
      </StatusBar>
    </Page>
  );
}
